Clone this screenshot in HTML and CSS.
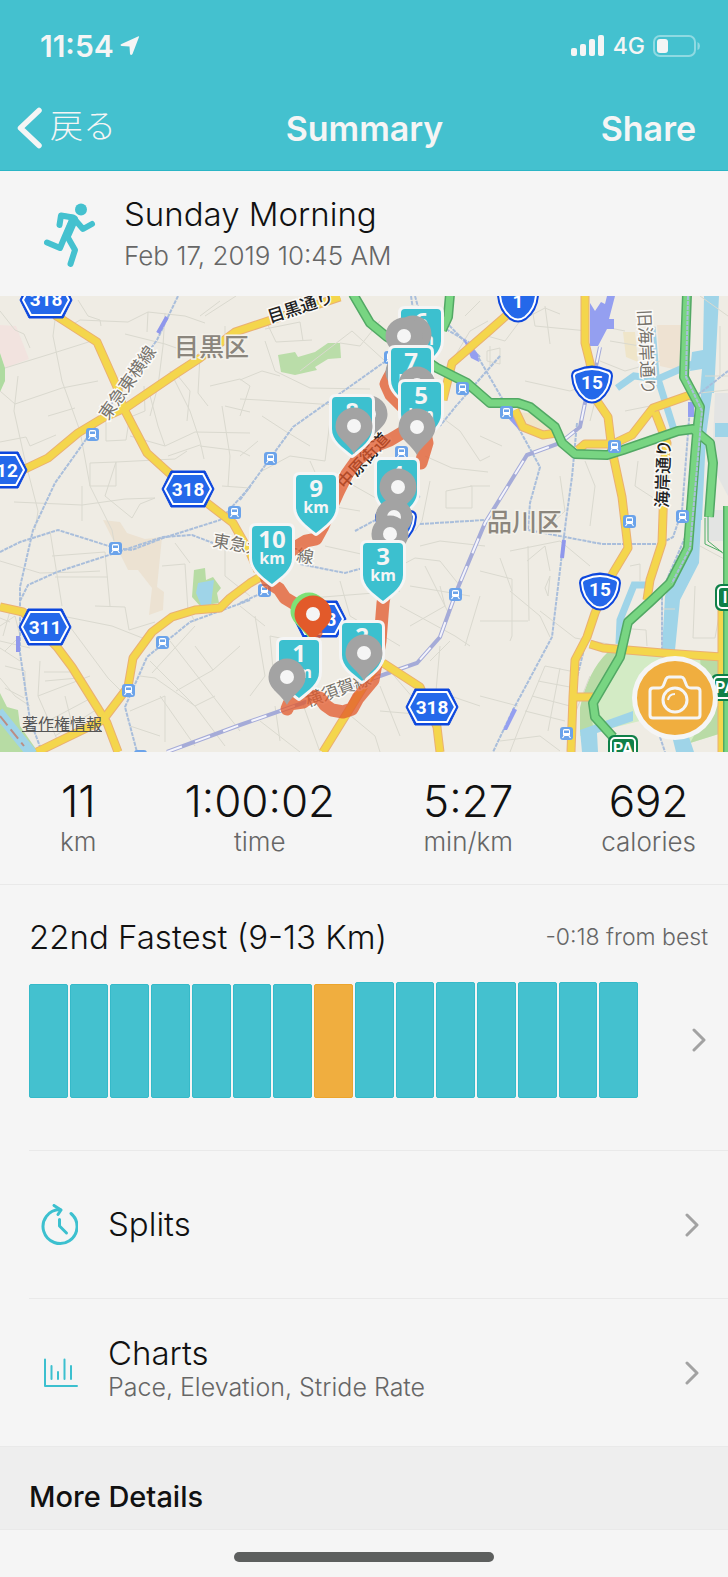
FILE: index.html
```
<!DOCTYPE html>
<html lang="en">
<head>
    <meta charset="UTF-8">
    <meta name="viewport" content="width=device-width, initial-scale=1.0">
    <title>Summary</title>
    <link rel="stylesheet" href="styles.css">
</head>
<body>
    <header class="top">
        <div class="status-bar">
            <div class="status-left">
                <span class="clock">11:54</span>
                <svg class="location-icon" width="20" height="20" viewBox="0 0 20 20"><path d="M19 1 L12.500 18 Q11 20 10 18 L9.500 10.500 L1.500 10 Q-0.500 9 1.500 8 L18 0.500 Q19.500 0 19 1Z" fill="#f5f5f5"/></svg>
            </div>
            <div class="status-right">
                <svg width="34" height="22" viewBox="0 0 34 22" fill="#f5f5f5">
                    <rect x="0" y="13" width="6" height="8" rx="2"/>
                    <rect x="9" y="9" width="6" height="12" rx="2"/>
                    <rect x="18" y="4" width="6" height="17" rx="2"/>
                    <rect x="27" y="0" width="6" height="21" rx="2"/>
                </svg>
                <span class="network">4G</span>
                <svg width="48" height="24" viewBox="0 0 48 24">
                    <rect x="1" y="2" width="41" height="20" rx="6" fill="none" stroke="#8fdae2" stroke-width="2"/>
                    <rect x="4" y="5" width="11" height="14" rx="3" fill="#f5f5f5"/>
                    <path d="M44.500 8 Q47 9 47 12 Q47 15 44.500 16Z" fill="#8fdae2"/>
                </svg>
            </div>
        </div>
        <nav class="nav-bar">
            <button class="nav-back" type="button">
                <svg width="26" height="42" viewBox="0 0 26 42"><path d="M22 3.500 L3.500 21 L22 38.500" fill="none" stroke="#f5f5f5" stroke-width="5.500" stroke-linecap="round" stroke-linejoin="round"/></svg>
                <span lang="ja">戻る</span>
            </button>
            <h1>Summary</h1>
            <button class="nav-share" type="button">Share</button>
        </nav>
    </header>

    <main>
        <section class="activity">
            <svg class="runner" width="52" height="66" viewBox="0 0 52 66">
                <circle cx="37" cy="7.500" r="6" fill="#44c1cf"/>
                <path d="M17 11 L30 13 Q35 14 34 19 L26 37 L19 33 L25 18Z" fill="#44c1cf"/>
                <g fill="none" stroke="#44c1cf" stroke-width="6" stroke-linecap="round" stroke-linejoin="round">
                    <path d="M15.500 23 L17 13.500 L29 15.500 L39 27 L48 22"/>
                    <path d="M28 18 L21 34 L16 46 L3 40.500"/>
                    <path d="M23 34 L31 48 L26.500 62"/>
                </g>
            </svg>
            <div>
                <h2>Sunday Morning</h2>
                <p>Feb 17, 2019 10:45 AM</p>
            </div>
        </section>

        <section class="map">
            <svg class="map-canvas" viewBox="0 0 728 456" role="img" aria-label="Route map">
                <defs>
                    <g id="hex">
                        <path d="M-26 0 L-17 -18 H17 L26 0 L17 18 H-17Z" fill="#0d47dd" stroke="#0d47dd" stroke-width="1" stroke-linejoin="round"/>
                        <path d="M-23 0 L-15 -15 H15 L23 0 L15 15 H-15Z" fill="#2468ea" stroke="#fff" stroke-width="2" stroke-linejoin="round"/>
                    </g>
                    <g id="shield">
                        <path d="M-21 -8 Q-21 -14 -15 -15 Q0 -22 15 -15 Q21 -14 21 -8 Q20 8 8 17 Q0 22 -8 17 Q-20 8 -21 -8Z" fill="#0d47dd"/>
                        <path d="M-18 -8 Q-18 -11 -14 -12 Q0 -18 14 -12 Q18 -11 18 -8 Q17 6 7 14 Q0 19 -7 14 Q-17 6 -18 -8Z" fill="#2468ea" stroke="#fff" stroke-width="2"/>
                    </g>
                    <g id="station">
                        <rect x="-6" y="-6" width="13" height="13" rx="3" fill="#6ba3ea"/>
                        <rect x="-3" y="-4" width="7" height="7" rx="1.500" fill="#fff"/>
                        <rect x="-2" y="-2.500" width="5" height="2.500" fill="#6ba3ea"/>
                        <path d="M-2 3 L-3.500 5 M3 3 L4.500 5" stroke="#fff" stroke-width="1.200"/>
                    </g>
                    <path id="tag" d="M-20 4 Q-20 0 -16 0 H16 Q20 0 20 4 V32 C20 43 10 50 0 58 C-10 50 -20 43 -20 32Z" fill="#3cc0cf" stroke="#f5f5f5" stroke-width="6" stroke-linejoin="round" paint-order="stroke"/>
                    <g id="pin">
                        <path d="M0 -18.500 A18.500 18.500 0 0 1 18.500 0 C18.500 12 7 16 0 28 C-7 16 -18.500 12 -18.500 0 A18.500 18.500 0 0 1 0 -18.500Z"/>
                        <circle r="7" fill="#f5f5f5"/>
                    </g>
                </defs>

                <rect width="728" height="456" fill="#efece4"/>

                <!-- land use -->
                <path d="M0 29 L16 30 L29 63 L5 72 L0 57Z" fill="#f2e3df"/>
                <path d="M0 57 L5 72 L5 85 L0 96Z" fill="#aedba0"/>
                <path d="M278 59 L295 56 L298 61 L315 56 L328 47 H340 L341 62 L328 63 L315 71 L317 74 L295 79 L281 76Z" fill="#badda9"/>
                <path d="M103 224 L120 226 L127 237 L145 243 L162 241 L157 291 L164 296 L163 314 L149 319 L152 292 L138 274 H128Z" fill="#ece2d2"/>
                <path d="M194 274 L205 272 L206 284 L213 281 L221 292 L217 297 L219 307 L200 310 L192 301Z" fill="#b7dca4"/>
                <path d="M198 287 L214 284 L211 309 H201 L196 297Z" fill="#9fd4e8"/>
                <path d="M0 397 L7 411 L18 414 L20 430 L38 456 H0Z" fill="#b7dca4"/>
                <path d="M623 36 H635 L638 66 L626 61Z M510 115 L545 119 L555 134 L540 136 L525 130Z" fill="#efe5c9"/>
                <path d="M657 29 H687 L682 75 L660 70Z" fill="#eee2d2"/>
                <path d="M715 97 H728 V200 L712 170Z M704 214 H728 V245 H708Z" fill="#e3e4e3"/>
                <path d="M608 356 L722 364 V437 L690 447 L640 425 L580 440 V412 Q588 375 608 356Z" fill="#d3ebc5"/>
                <path d="M608 356 L622 357 L590 412 L593 430 L580 436 V412 Q588 375 608 356Z M700 362 L722 364 V437 L690 447 L705 420Z" fill="#b9dba6"/>

                <!-- water -->
                <g fill="#9fd4e8">
                    <path d="M704 0 H719 L714 97 H700 L702 73 L690 75 L692 56 L703 54Z"/>
                    <path d="M701 97 H712 L706 140 L702 224 H690 L697 150Z"/>
                    <path d="M690 224 H701 L699 267 L680 304 L675 354 H662 L665 300 L687 260Z"/>
                    <rect x="715" y="127" width="13" height="14"/>
                    <path d="M580 434 L633 415 V425 L597 437 L598 456 H582Z M672 440 L688 438 L694 456 H676Z"/>
                </g>
                <g fill="none" stroke="#9fd4e8" stroke-width="7">
                    <path d="M617 92 L634 80 L658 83 L692 68"/>
                    <path d="M658 83 L675 137"/>
                    <path d="M653 31 L657 80" stroke-width="5"/>
                    <path d="M647 289 H634 L620 324 L619 348"/>
                    <path d="M-2 416 L32 458" stroke-width="11"/>
                </g>
                <path d="M0 420 L24 450" stroke="#bb8d84" stroke-width="2" stroke-dasharray="12 5" fill="none"/>

                <!-- minor streets -->
                <g class="street">
                    <path d="M0 15 L15 34 L24 38 L30 52 M58 0 L53 40 L62 85 L80 135 L90 190 L112 234 L114 245"/>
                    <path d="M5 72 L60 55 L98 43 M70 30 L80 24 L128 26 L148 16 L185 20 L205 27"/>
                    <path d="M125 38 L165 48 L182 54 M148 16 L147 36 M165 17 L163 50 L158 90 L150 120"/>
                    <path d="M0 95 L15 108 L62 92 L98 85 M18 80 L14 115 L24 160 L38 215 L35 234"/>
                    <path d="M48 120 L75 112 M0 146 L26 141 L30 150 L56 139 M106 105 V145 L126 144 L130 118"/>
                    <path d="M130 140 L165 150 L195 136 L250 137 M144 90 L145 115 L128 122 M148 92 L158 130 L165 150"/>
                    <path d="M170 75 L190 115 L200 145 L204 163 M178 80 L190 95 L187 125 M200 60 L198 97 L208 110"/>
                    <path d="M225 110 L250 116 M222 110 L230 160 L228 190 M200 150 L240 155 L250 160 M168 160 L200 149"/>
                    <path d="M14 206 L82 209 L125 203 L155 202 M82 190 V225 M90 167 L116 166 V190 L90 190Z M116 166 L175 163 L187 155"/>
                    <path d="M116 166 L105 200 L132 222 L140 208 L155 202 M250 192 L222 190 M205 20 L236 0 M225 30 V50 L240 60"/>
                    <path d="M78 4 L88 20 L100 24 L101 30 M200 20 L220 5 M210 90 L240 83 L250 90"/>
                    <path d="M266 25 L276 46 L312 44 M265 33 L300 26 L303 45 M265 45 L275 75 L310 92 L370 93"/>
                    <path d="M240 103 L260 104 L350 110 L370 102 M240 84 L262 75 L280 80 M250 90 L240 120 M258 145 L240 160"/>
                    <path d="M300 75 L352 35 L385 65 M340 47 L360 50 L380 25 M330 125 L325 165 L290 160 L262 175"/>
                    <path d="M262 120 L285 135 L310 150 M300 180 L342 183 L390 210 M310 165 L330 210 L360 215"/>
                    <path d="M425 160 L452 172 L488 176 M430 185 L422 225 L415 235 M446 195 L472 190 V212 H446Z"/>
                    <path d="M470 190 L490 190 M440 120 L460 135 L480 165 L490 160 M455 60 L470 35 L488 25 M465 20 L480 5"/>
                    <path d="M480 38 L505 45 L520 25 L545 12 L560 18 M545 10 L550 48 M525 85 L570 95 L590 88"/>
                    <path d="M487 55 L500 52 V68 L487 65Z M490 50 V70 M530 0 L535 30 L588 35"/>
                    <path d="M480 140 L502 150 M560 180 L565 215 L545 234 M585 165 L595 190 L590 230 M638 165 L635 190 L658 205"/>
                    <path d="M600 30 L625 35 M610 45 L640 50 M600 65 L625 75 L660 65 M600 85 L590 125 M690 98 L728 94"/>
                    <path d="M625 115 L650 110 M700 0 L728 20 M720 30 V80 M705 80 H728 M660 160 L668 190 L664 234"/>
                    <path d="M0 265 L40 277 L80 276 L100 275 M50 235 L62 310 M52 260 L105 256 L110 310 M55 281 H108"/>
                    <path d="M95 310 L125 311 L129 334 L155 326 M62 320 L112 330 L150 345 M62 320 L108 382 L128 402"/>
                    <path d="M162 270 L185 268 L188 315 M175 247 L190 267 M225 245 V280 L250 300 M195 326 L192 320"/>
                    <path d="M150 365 L195 410 L225 450 M170 345 L240 435 M152 377 L195 330 M176 395 L213 374 M130 415 L165 400 V446"/>
                    <path d="M140 380 L155 382 L195 410 L215 400 M130 430 L160 440 M160 400 L195 450 M240 350 L213 374 L195 350"/>
                    <path d="M40 365 L38 400 L60 450 M44 376 L70 376 M45 385 L78 382 M38 400 L90 380 M48 425 L95 400 M55 440 L102 410"/>
                    <path d="M0 330 L15 320 L20 340 L5 355 M0 345 L30 352 M5 370 L25 375 L25 400 M0 382 L15 400 L30 410"/>
                    <path d="M0 322 L10 326 M10 315 L3 340 M0 352 L20 365 M5 392 L24 402 M65 400 L75 440"/>
                    <path d="M340 285 L350 320 L400 350 M310 302 L400 295 M400 270 L415 262 L440 265 L460 290 M410 290 L470 300"/>
                    <path d="M400 310 L455 340 L470 350 M410 330 L445 310 L440 290 M425 270 L450 320 M440 350 L436 395 L480 410"/>
                    <path d="M270 340 L275 395 M255 320 L265 380 L250 400 M240 310 L265 330 M270 340 L295 345 M450 345 L430 365"/>
                    <path d="M260 425 L300 456 M275 410 L280 445 M300 400 L320 456 M345 415 L375 440 L380 456 M380 390 L400 440"/>
                    <path d="M390 375 L420 410 M380 415 L440 420 M420 250 L440 245 L485 250 M480 300 L465 350 M325 250 L370 260"/>
                    <path d="M480 275 L512 283 V340 L510 345 M480 325 H528 M528 250 L529 325 M480 400 L518 410 M550 341 L540 320 L510 295"/>
                    <path d="M540 315 L575 342 L620 350 M545 370 L575 376 M538 385 L575 392 M532 400 L570 410 M525 415 L565 425 M545 370 L520 430 M560 372 L548 435"/>
                    <path d="M510 255 L560 245 L590 270 M527 265 L545 250 L550 275 M545 292 L550 280 L548 300Z M500 262 L512 295 M590 380 L570 430"/>
                    <path d="M630 270 L640 268 V285 M632 333 L646 334 L647 350 M662 313 H675 M700 250 L728 265 M693 342 H715 L719 320 M695 290 L693 342"/>
                    <path d="M500 445 L540 440 L560 455 M510 456 L520 430"/>
                </g>

                <!-- railways -->
                <g class="rail">
                    <path d="M178 0 L157 44 L87 142 L55 187 L33 234 L20 291 V357 L30 424 L42 456"/>
                    <path d="M0 256 L20 246 L58 234 L115 252 L132 254 L163 242 L220 224 L250 191"/>
                    <path d="M20 305 L28 289 L57 276 L115 257 L163 241 L192 239 L213 247"/>
                    <path d="M240 204 L293 131 L383 67 L400 60"/>
                    <path d="M250 304 L190 326 L147 361 L125 411 L137 456"/>
                    <path d="M577 127 L572 181 L566 224 L552 341 L513 414 L493 456"/>
                    <path d="M411 0 L414 20 M415 0 L420 18 M446 33 L470 47 L507 111 L540 171 L530 207 L528 234 L602 248 H660 L673 241 L682 215 L690 111"/>
                    <path d="M500 60 L456 110 L440 130"/>
                    <path d="M600 110 L612 130 L628 250 L587 341 L575 390 L570 456"/>
                    <path d="M687 0 L685 81 L700 115 L690 230 L662 295 V360"/>
                    <path d="M690 105 L728 75 M300 268 L345 277 L370 270 M355 235 L420 200 M420 228 L485 224"/>
                    <path d="M240 307 L264 296 M480 61 L440 20 M660 441 L665 456"/>
                </g>
                <path class="jr" d="M600 51 L595 75 L585 107 L580 131 L560 147 L527 159 L485 227 L457 294 L440 341 L417 367 L377 381 L240 429 L167 456"/>
                <path class="jr-dash" d="M600 51 L595 75 L585 107 L580 131 L560 147 L527 159 L485 227 L457 294 L440 341 L417 367 L377 381 L240 429 L167 456"/>
                <path d="M590 7 L595 15 L601 6 L605 8 L607 0 H615 L609 23 H614 V33 H607 L598 50 H590Z M688 106 H694 V121 H688Z M463 42 L478 58 L479 66 L471 62Z M503 434 L513 412 L517 414 L507 434Z M508 122 L519 134 L522 130 L512 117Z" fill="#949ff0"/>
                <path d="M158 37 L167 21 M564 244 L562 262 M18 340 V356" stroke="#8f97ec" stroke-width="4"/>

                <!-- main roads, casing first -->
                <g class="road-case">
                    <path d="M55 19 L97 46 L117 91 L123 111 L147 157 L168 176 L207 207 L233 227 L250 257 L258 275 M383 367 L420 391 L437 431 L440 456"/>
                    <path d="M0 182 L27 172 L48 162 L78 137 L103 122 L127 111 L177 77 L200 62 L235 36 L250 31 L340 1"/>
                    <path d="M0 311 L23 316 L57 351 L72 371 L107 427 L118 456"/>
                    <path d="M37 456 L103 424 L128 391 L133 362 L152 336 L172 321 L195 314 L220 312 L230 302 L250 287 L262 280"/>
                    <path d="M323 456 L380 364 M443 104 L452 67 L490 34 L507 19 L520 0"/>
                    <path d="M585 0 V47 L590 67 L597 105 L608 121 L612 154 L622 201 L628 252 L613 277 L595 317 L587 341 L575 364 L573 401 L571 456"/>
                    <path d="M578 154 L585 148 H613 L632 139 L653 112 L690 99 M655 116 L667 147 L665 161 L662 247 L650 284 L647 304"/>
                    <path d="M515 114 L523 131 L543 139 L557 137 M590 348 L603 352 L663 357 L722 361 M575 401 H593 M722 307 V456"/>
                </g>
                <g class="road">
                    <path d="M55 19 L97 46 L117 91 L123 111 L147 157 L168 176 L207 207 L233 227 L250 257 L258 275 M383 367 L420 391 L437 431 L440 456"/>
                    <path d="M0 182 L27 172 L48 162 L78 137 L103 122 L127 111 L177 77 L200 62 L235 36 L250 31 L340 1"/>
                    <path d="M0 311 L23 316 L57 351 L72 371 L107 427 L118 456"/>
                    <path d="M37 456 L103 424 L128 391 L133 362 L152 336 L172 321 L195 314 L220 312 L230 302 L250 287 L262 280"/>
                    <path d="M323 456 L380 364 M443 104 L452 67 L490 34 L507 19 L520 0"/>
                    <path d="M585 0 V47 L590 67 L597 105 L608 121 L612 154 L622 201 L628 252 L613 277 L595 317 L587 341 L575 364 L573 401 L571 456"/>
                    <path d="M578 154 L585 148 H613 L632 139 L653 112 L690 99 M655 116 L667 147 L665 161 L662 247 L650 284 L647 304"/>
                    <path d="M515 114 L523 131 L543 139 L557 137 M590 348 L603 352 L663 357 L722 361 M575 401 H593 M722 307 V456"/>
                </g>
                <g class="express-case">
                    <path d="M353 -2 L370 27 L387 41 L410 54 L437 72 L467 87 L490 107 L518 107 L530 111 L555 131 L562 147 L575 158 L607 159 L623 154 L678 135 L693 133 L710 147 L713 167 L709 221"/>
                    <path d="M450 -2 L448 21 L442 34 M687 -2 L684 81 L700 111 L697 137 L695 161 L688 252 L670 287 L650 306 L628 326 L620 361 L593 407 L595 421 L613 441 M728 210 V456"/>
                </g>
                <g class="express">
                    <path d="M353 -2 L370 27 L387 41 L410 54 L437 72 L467 87 L490 107 L518 107 L530 111 L555 131 L562 147 L575 158 L607 159 L623 154 L678 135 L693 133 L710 147 L713 167 L709 221"/>
                    <path d="M450 -2 L448 21 L442 34 M687 -2 L684 81 L700 111 L697 137 L695 161 L688 252 L670 287 L650 306 L628 326 L620 361 L593 407 L595 421 L613 441 M728 210 V456"/>
                </g>
                <path class="rail" d="M688 0 L686 81 L702 115 L690 252 L672 287"/>
                <path d="M708 220 V245 L724 258 M705 222 V248 L722 256" fill="none" stroke="#4fae66" stroke-width="1"/>

                <g>
                    <use href="#station" x="92" y="138"/>
                    <use href="#station" x="234" y="216"/>
                    <use href="#station" x="270" y="162"/>
                    <use href="#station" x="462" y="92"/>
                    <use href="#station" x="401" y="156"/>
                    <use href="#station" x="390" y="61"/>
                    <use href="#station" x="506" y="116"/>
                    <use href="#station" x="614" y="150"/>
                    <use href="#station" x="629" y="225"/>
                    <use href="#station" x="682" y="220"/>
                    <use href="#station" x="115" y="252"/>
                    <use href="#station" x="162" y="346"/>
                    <use href="#station" x="128" y="394"/>
                    <use href="#station" x="140" y="460"/>
                    <use href="#station" x="264" y="294"/>
                    <use href="#station" x="455" y="298"/>
                    <use href="#station" x="566" y="437"/>
                </g>

                <!-- place names -->
                <g class="ward">
                    <text x="174" y="60">目黒区</text>
                    <text x="487" y="235">品川区</text>
                </g>
                <g class="line-name">
                    <text transform="translate(108 125) rotate(-55)">東急東横線</text>
                    <text transform="translate(212 250) rotate(10)">東急大井町線</text>
                    <text transform="translate(308 411) rotate(-20)">横須賀線</text>
                    <text transform="translate(638 14) rotate(87)">旧海岸通り</text>
                </g>
                <g class="street-name">
                    <text transform="translate(270 27) rotate(-18)">目黒通り</text>
                    <text transform="translate(345 194) rotate(-48)">中原街道</text>
                    <text transform="translate(668 212) rotate(-88)">海岸通り</text>
                </g>

                <!-- road numbers -->
                <use href="#hex" x="46" y="4"/>
                <use href="#hex" x="1" y="174"/>
                <use href="#hex" x="188" y="193"/>
                <use href="#hex" x="45" y="331"/>
                <use href="#hex" x="432" y="411"/>
                <use href="#hex" x="320" y="323"/>
                <use href="#shield" x="518" y="7"/>
                <use href="#shield" x="592" y="88"/>
                <use href="#shield" x="600" y="295"/>
                <use href="#shield" x="396" y="229"/>
                <g class="road-no">
                    <text x="46" y="10">318</text>
                    <text x="7" y="181">12</text>
                    <text x="188" y="200">318</text>
                    <text x="45" y="338">311</text>
                    <text x="432" y="418">318</text>
                    <text x="320" y="330">318</text>
                    <text x="518" y="12">1</text>
                    <text x="592" y="93">15</text>
                    <text x="600" y="300">15</text>
                </g>
                <g fill="#0f8048" stroke="#fff" stroke-width="2">
                    <rect x="609" y="440" width="28" height="26" rx="5" stroke="#0f8048"/>
                    <rect x="611" y="442" width="24" height="24" rx="4"/>
                    <rect x="712" y="379" width="28" height="25" rx="5" stroke="#0f8048"/>
                    <rect x="714" y="381" width="26" height="21" rx="4"/>
                    <rect x="716" y="289" width="24" height="25" rx="5" stroke="#0f8048"/>
                    <rect x="718" y="291" width="24" height="21" rx="4"/>
                </g>
                <g class="exit-no">
                    <text x="623" y="458">PA</text>
                    <text x="725" y="397">PA</text>
                    <text x="725" y="307">I</text>
                </g>

                <!-- recorded run -->
                <g class="run">
                    <path d="M287 413 L289 408 L303 406 L312 400 L320 402 L325 409 L332 414 L343 416 L352 413 L358 402 L373 384 L380 345 L383 307 L394 240"/>
                    <path d="M421 167 L427 147 L423 128 L405 135 L390 144 L375 150 L357 164 L347 178 L338 196 L322 232 L316 243 L306 245 L296 251 L282 262 L265 278 L268 286 L279 293 L285 302 L295 308 L304 320 L316 337"/>
                    <path d="M408 116 L391 99 L386 88 L389 82 L398 66"/>
                </g>

                <!-- kilometre tags and photo pins -->
                <g class="tags">
                    <use href="#tag" x="421" y="13"/>
                    <text class="no" x="421" y="34">6</text>
                    <text class="km" x="421" y="49">km</text>
                    <use href="#pin" x="413" y="38" fill="#a3a3a3"/>
                    <use href="#pin" x="404" y="40" fill="#a3a3a3"/>
                    <use href="#pin" x="404" y="76" fill="#a3a3a3"/>
                    <use href="#tag" x="411" y="52"/>
                    <text class="no" x="411" y="74">7</text>
                    <text class="km" x="411" y="90">km</text>
                    <use href="#pin" x="417" y="89" fill="#a3a3a3"/>
                    <use href="#tag" x="421" y="86"/>
                    <text class="no" x="421" y="108">5</text>
                    <text class="km" x="421" y="124">km</text>
                    <use href="#pin" x="369" y="118" fill="#a3a3a3"/>
                    <use href="#tag" x="352" y="101"/>
                    <text class="no" x="352" y="124">8</text>
                    <use href="#pin" x="354" y="130" fill="#a3a3a3"/>
                    <use href="#pin" x="417" y="131" fill="#a3a3a3"/>
                    <use href="#tag" x="397" y="164"/>
                    <text class="no" x="397" y="187">4</text>
                    <use href="#pin" x="398" y="191" fill="#a3a3a3"/>
                    <use href="#pin" x="394" y="221" fill="#a3a3a3"/>
                    <use href="#pin" x="390" y="238" fill="#a3a3a3"/>
                    <use href="#tag" x="316" y="179"/>
                    <text class="no" x="316" y="201">9</text>
                    <text class="km" x="316" y="217">km</text>
                    <use href="#tag" x="272" y="230"/>
                    <text class="no" x="272" y="252">10</text>
                    <text class="km" x="272" y="268">km</text>
                    <use href="#tag" x="383" y="247"/>
                    <text class="no" x="383" y="269">3</text>
                    <text class="km" x="383" y="285">km</text>
                    <use href="#pin" x="309" y="315" fill="#7ee276"/>
                    <use href="#pin" x="313" y="318" fill="#e25a2a"/>
                    <use href="#tag" x="362" y="327"/>
                    <text class="no" x="362" y="349">2</text>
                    <use href="#pin" x="364" y="357" fill="#a3a3a3"/>
                    <use href="#tag" x="299" y="344"/>
                    <text class="no" x="299" y="366">1</text>
                    <text class="km" x="299" y="382">km</text>
                    <use href="#pin" x="287" y="381" fill="#a3a3a3"/>
                </g>
            </svg>
            <a class="legal" href="#legal" lang="ja">著作権情報</a>
            <button class="camera" type="button" aria-label="Add photo">
                <svg width="54" height="46" viewBox="0 0 54 46" fill="none" stroke="#f5f5f5" stroke-width="3" stroke-linejoin="round">
                    <path d="M5 13 H11 Q15 13 16 9 L18 4 Q19 2 21 2 H33 Q35 2 36 4 L38 9 Q39 13 43 13 H49 Q52 13 52 16 V40 Q52 43 49 43 H5 Q2 43 2 40 V16 Q2 13 5 13Z"/>
                    <circle cx="27" cy="25" r="12"/>
                    <path d="M20 25 Q21 19 27 19" stroke-width="2"/>
                </svg>
            </button>
        </section>

        <section class="stats">
            <div class="stat"><strong>11</strong><span>km</span></div>
            <div class="stat"><strong>1:00:02</strong><span>time</span></div>
            <div class="stat"><strong>5:27</strong><span>min/km</span></div>
            <div class="stat"><strong>692</strong><span>calories</span></div>
        </section>

        <section class="ranking">
            <div class="ranking-head">
                <h2>22nd Fastest (9-13 Km)</h2>
                <span>-0:18 from best</span>
            </div>
            <div class="ranking-body">
                <div class="bars">
                    <i></i><i></i><i></i><i></i><i></i><i></i><i></i><i class="current"></i>
                    <i class="tall"></i><i class="tall"></i><i class="tall"></i><i class="tall"></i><i class="tall"></i><i class="tall"></i><i class="tall"></i>
                </div>
                <svg class="chevron" width="14" height="24" viewBox="0 0 14 24"><path d="M2 2 L12 12 L2 22"/></svg>
            </div>
        </section>

        <a class="row" href="#splits">
            <svg class="row-icon" width="38" height="42" viewBox="0 0 38 42">
                <path d="M31 9.500 A17 17 0 1 1 20 5.500"/>
                <path d="M14 1.500 L21 6 L18 10.500"/>
                <path d="M19.500 15.500 V22 L26.500 29"/>
            </svg>
            <div class="row-text"><h3>Splits</h3></div>
            <svg class="chevron" width="14" height="24" viewBox="0 0 14 24"><path d="M2 2 L12 12 L2 22"/></svg>
        </a>
        <a class="row" href="#charts">
            <svg class="row-icon chart-icon" width="38" height="30" viewBox="0 0 38 30">
                <path d="M5 1.500 V28 H37 M11.500 8 V21 M18 14 V21 M24.500 1.500 V21 M31 8 V21"/>
            </svg>
            <div class="row-text detailed">
                <h3>Charts</h3>
                <p>Pace, Elevation, Stride Rate</p>
            </div>
            <svg class="chevron" width="14" height="24" viewBox="0 0 14 24"><path d="M2 2 L12 12 L2 22"/></svg>
        </a>

        <h2 class="more">More Details</h2>
    </main>
    <div class="home-indicator"></div>
</body>
</html>
```
FILE: styles.css
```
* {
    box-sizing: border-box;
}
body {
    margin: 0;
    background-color: #f5f5f5;
    color: #111;
    font-family: Inter, "Noto Sans CJK JP", sans-serif;
    font-weight: 300;
}
h1, h2, h3, p {
    margin: 0;
    font-weight: 300;
}
button {
    padding: 0;
    border: none;
    background: none;
    color: inherit;
    font-family: inherit;
    cursor: pointer;
}
a {
    color: inherit;
    text-decoration: none;
}
svg {
    display: block;
    flex: none;
}

/* header */
.top {
    background-color: #44c1cf;
    border-bottom: 1px solid #2ab5c5;
    color: #f5f5f5;
}
.status-bar {
    display: flex;
    justify-content: space-between;
    align-items: center;
    height: 90px;
    padding: 1px 27px 0 40px;
}
.status-left, .status-right {
    display: flex;
    align-items: center;
}
.status-left {
    gap: 6px;
}
.status-right {
    gap: 8px;
}
.clock {
    font-size: 30px;
    font-weight: 600;
}
.network {
    font-size: 23px;
    font-weight: 500;
}
.nav-bar {
    display: grid;
    grid-template-columns: 1fr auto 1fr;
    align-items: center;
    height: 80px;
    padding: 0 32px 4px 17px;
}
.nav-back {
    display: flex;
    align-items: center;
    gap: 7px;
    font-size: 33px;
    font-weight: 300;
    line-height: 42px;
}
.nav-back span {
    padding-bottom: 4px;
}
.nav-bar h1, .nav-share {
    font-size: 34px;
    font-weight: 600;
}
.nav-bar h1 {
    padding-left: 16px;
}
.nav-share {
    justify-self: end;
}

/* activity title */
.activity {
    display: flex;
    align-items: center;
    gap: 28px;
    height: 125px;
    padding: 2px 44px 0;
}
.activity h2 {
    font-size: 33px;
    line-height: 42px;
}
.activity p {
    color: #666;
    font-size: 26px;
    line-height: 42px;
}

/* map */
.map {
    position: relative;
}
.map-canvas {
    width: 100%;
    height: auto;
    font-family: Inter, "Noto Sans CJK JP", sans-serif;
}
.street {
    fill: none;
    stroke: #dad9cf;
    stroke-width: 1;
}
.rail {
    fill: none;
    stroke: #a9bedb;
    stroke-width: 2;
    stroke-dasharray: 4 1;
}
.jr {
    fill: none;
    stroke: #a5abd8;
    stroke-width: 4;
}
.jr-dash {
    fill: none;
    stroke: #f4f4fb;
    stroke-width: 2;
    stroke-dasharray: 16 14;
}
.road-case, .road, .express-case, .express, .run {
    fill: none;
    stroke-linejoin: round;
}
.road-case {
    stroke: #eab072;
    stroke-width: 9;
}
.road {
    stroke: #f4d64c;
    stroke-width: 7;
}
.express-case {
    stroke: #52a864;
    stroke-width: 10;
}
.express {
    stroke: #78d582;
    stroke-width: 7;
}
.run {
    stroke: #e2582b;
    stroke-opacity: 0.75;
    stroke-width: 13;
    stroke-linecap: round;
}
.ward {
    fill: #8b867d;
    stroke: #f3f1ea;
    stroke-width: 3;
    paint-order: stroke;
    font-size: 25px;
    font-weight: 500;
}
.line-name, .street-name {
    fill: #77736c;
    stroke: #fbfaf7;
    stroke-width: 3;
    paint-order: stroke;
    font-size: 17px;
    font-weight: 400;
}
.street-name {
    fill: #222;
    font-weight: 500;
}
.road-no, .exit-no {
    fill: #fff;
    font-family: Roboto, sans-serif;
    font-size: 19px;
    font-weight: 700;
    text-anchor: middle;
}
.exit-no {
    font-size: 16px;
}
.tags {
    fill: #f5f5f5;
    font-family: "Noto Sans", sans-serif;
    font-weight: 700;
    text-anchor: middle;
}
.tags .no {
    font-size: 24px;
}
.tags .km {
    font-size: 16px;
}
.legal {
    position: absolute;
    bottom: 17px;
    left: 22px;
    color: #555;
    font-size: 16px;
    font-weight: 400;
    text-decoration: underline;
}
.camera {
    position: absolute;
    right: 10px;
    bottom: 12px;
    display: flex;
    align-items: center;
    justify-content: center;
    width: 86px;
    height: 84px;
    border: 5px solid #f5f5f5;
    border-radius: 50%;
    background-color: #f0ae3f;
}

/* totals */
.stats {
    display: flex;
    justify-content: space-between;
    height: 133px;
    padding: 24px 32px 0 60px;
    border-bottom: 1px solid #e9e9e9;
}
.stat {
    display: flex;
    flex-direction: column;
    align-items: center;
}
.stat strong {
    font-size: 44px;
    font-weight: 300;
    line-height: 50px;
}
.stat span {
    color: #666;
    font-size: 26px;
    line-height: 32px;
}

/* ranking chart */
.ranking {
    height: 265px;
    padding: 31px 20px 0 29px;
}
.ranking-head {
    display: flex;
    justify-content: space-between;
    align-items: center;
    height: 42px;
}
.ranking-head h2 {
    font-size: 33px;
}
.ranking-head span {
    color: #666;
    font-size: 23px;
}
.ranking-body {
    display: flex;
    align-items: center;
    gap: 54px;
    padding-top: 24px;
    padding-right: 2px;
}
.bars {
    display: flex;
    flex: 1;
    align-items: flex-end;
    gap: 2px;
    height: 116px;
}
.bars i {
    flex: 1;
    height: 114px;
    border: 1px solid #35bac9;
    border-radius: 2px;
    background-color: #44c1cf;
}
.bars .tall {
    height: 116px;
}
.bars .current {
    border-color: #eca52c;
    background-color: #f0ae3f;
}
.chevron {
    fill: none;
    stroke: #a2a2a2;
    stroke-width: 3;
    stroke-linecap: round;
    stroke-linejoin: round;
}

/* list rows */
.row {
    display: flex;
    align-items: center;
    gap: 30px;
    height: 148px;
    margin-left: 29px;
    padding: 0 29px 0 11px;
    border-top: 1px solid #e9e9e9;
}
.row-icon {
    fill: none;
    stroke: #3cc0cf;
    stroke-width: 3;
    stroke-linecap: round;
    stroke-linejoin: round;
}
.chart-icon {
    stroke-width: 2;
}
.row-text {
    flex: 1;
    padding-bottom: 2px;
}
.row-text.detailed {
    padding-bottom: 10px;
}
.row-text h3 {
    font-size: 33px;
    line-height: 38px;
}
.row-text p {
    color: #666;
    font-size: 25px;
    line-height: 30px;
}
.more {
    height: 84px;
    padding: 33px 29px 0;
    background-color: #eee;
    border-top: 1px solid #e9e9e9;
    border-bottom: 1px solid #e9e9e9;
    font-size: 29px;
    font-weight: 500;
    line-height: 34px;
}
.home-indicator {
    width: 260px;
    height: 10px;
    margin: 22px auto 16px;
    border-radius: 5px;
    background-color: #5d5f5e;
}
```
